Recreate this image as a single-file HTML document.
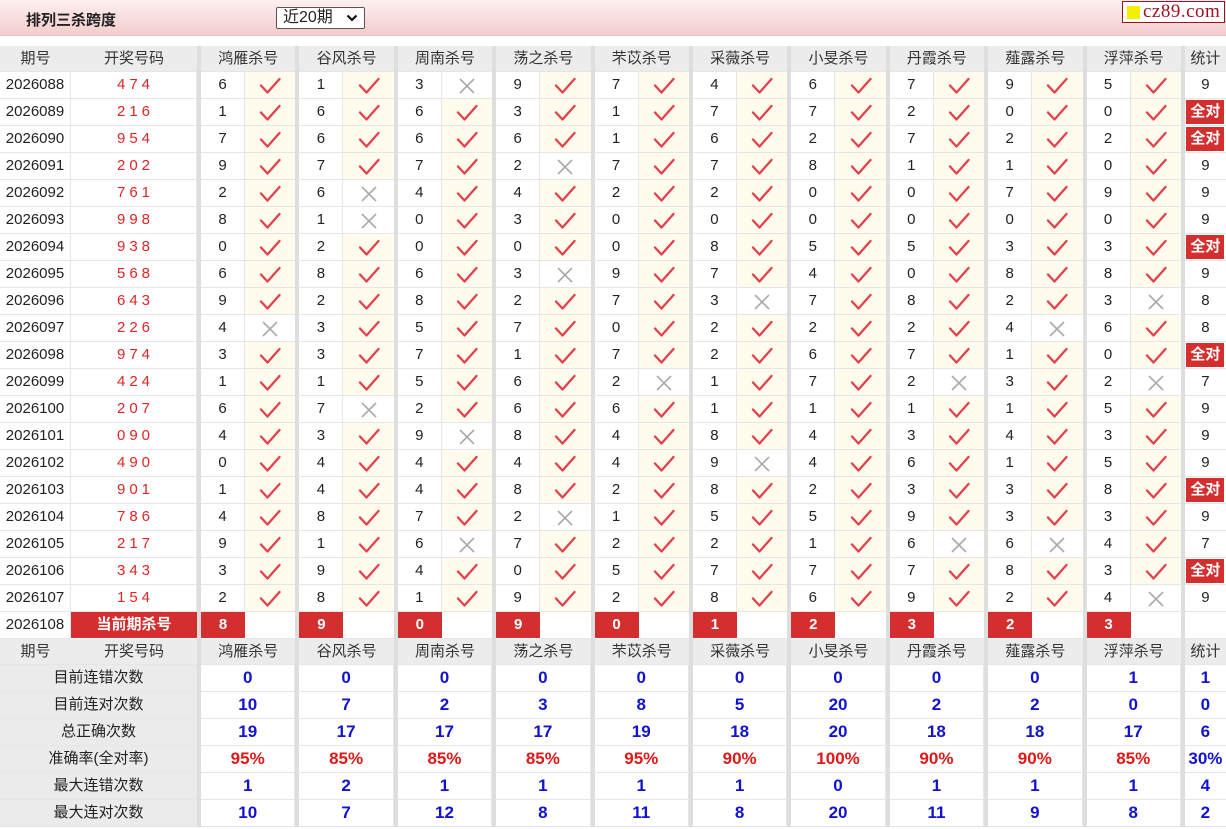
<!DOCTYPE html>
<html><head><meta charset="utf-8">
<style>
*{margin:0;padding:0;box-sizing:border-box}
body{width:1226px;height:829px;background:#fff;font-family:"Liberation Sans","Noto Sans CJK SC",sans-serif;font-size:15px;color:#222;overflow:hidden;position:relative}
.top{position:absolute;left:0;top:0;width:1226px;height:36px;background:linear-gradient(#fdf0f0,#f4cccc);border-bottom:1px solid #e8c4c4}
.top h1{position:absolute;left:26px;top:9px;font-size:15px;font-weight:bold;color:#222}
.sel{position:absolute;left:276px;top:7px;width:89px;height:22px;border:1px solid #555;border-radius:2px;background:#fff;font-size:16px;padding-left:6px;line-height:20px}
.sel svg{position:absolute;right:6px;top:6px}
.logo{position:absolute;left:1122px;top:1px;width:103px;height:22px;border:1px solid #a01020;background:#fff;font-family:"Liberation Serif",serif;font-size:19px;color:#a01020;line-height:20px;padding-left:20px;letter-spacing:0.5px}
.logo b{position:absolute;left:4px;top:4px;width:13px;height:13px;background:#f4f000}
.t{position:absolute;left:0;top:46px;width:1226px}
.r{display:grid;grid-template-columns:71px 126px repeat(10,4px 44px 50.4px) 4px 41px;height:27px}
.r>div{border-bottom:1px solid #e6e6e6;text-align:center;line-height:26px;white-space:nowrap;overflow:hidden}
.r>.s{background:#dedede;border-bottom:none}
.h{height:26px}
.h>div{background:#ececec;color:#333;font-size:15px;line-height:26px}
.r>.p{border-right:1px solid #e6e6e6;font-size:15px}
.r>.n{color:#e02424;letter-spacing:4px;padding-left:4px;border-right:1px solid #e6e6e6;font-size:15px}
.r>.d{border-right:1px solid #e6e6e6}
.r>.y{background:#fffcee}
.r>.y svg,.r>.w svg{margin-top:5px}
.r>.st{}
.q{display:inline-block;background:#d42f2f;color:#fff;font-weight:bold;width:38px;height:24px;line-height:24px;margin-top:1px;font-size:15px}
.cur>.k{background:#d42f2f;color:#fff;font-weight:bold;border-bottom:1px solid #fff}
.lab{grid-column:1 / span 2;background:#ebebeb !important;font-size:15px}
.v{grid-column:span 2;color:#1212d0;font-weight:bold;font-size:17px;border-right:1px solid #e6e6e6}
.red{color:#e01818}
.sv{color:#1212d0;font-weight:bold;font-size:17px}
</style></head><body>
<svg width="0" height="0" style="position:absolute">
<symbol id="k" viewBox="0 0 22 18"><path d="M2 8.5 L8.5 15.5 L20.5 2" fill="none" stroke="#e2404c" stroke-width="2.3" stroke-linecap="round" stroke-linejoin="round"/></symbol>
<symbol id="x" viewBox="0 0 22 18"><path d="M4 2 L18 16 M18 2 L4 16" fill="none" stroke="#aaa" stroke-width="1.6"/></symbol>
</svg>
<div class="top"><h1>排列三杀跨度</h1>
<div class="sel">近20期<svg width="12" height="8" viewBox="0 0 12 8"><path d="M1.5 1.5 L6 6 L10.5 1.5" fill="none" stroke="#111" stroke-width="2.2"/></svg></div>
<div class="logo"><b></b>cz89.com</div></div>
<div class="t">
<div class="r h"><div>期号</div><div>开奖号码</div><div class="s"></div><div style="grid-column:span 2">鸿雁杀号</div><div class="s"></div><div style="grid-column:span 2">谷风杀号</div><div class="s"></div><div style="grid-column:span 2">周南杀号</div><div class="s"></div><div style="grid-column:span 2">荡之杀号</div><div class="s"></div><div style="grid-column:span 2">芣苡杀号</div><div class="s"></div><div style="grid-column:span 2">采薇杀号</div><div class="s"></div><div style="grid-column:span 2">小旻杀号</div><div class="s"></div><div style="grid-column:span 2">丹霞杀号</div><div class="s"></div><div style="grid-column:span 2">薤露杀号</div><div class="s"></div><div style="grid-column:span 2">浮萍杀号</div><div class="s"></div><div>统计</div></div>
<div class="r"><div class="p">2026088</div><div class="n">474</div><div class="s"></div><div class="d">6</div><div class="y"><svg width="22" height="18"><use href="#k"/></svg></div><div class="s"></div><div class="d">1</div><div class="y"><svg width="22" height="18"><use href="#k"/></svg></div><div class="s"></div><div class="d">3</div><div class="w"><svg width="22" height="18"><use href="#x"/></svg></div><div class="s"></div><div class="d">9</div><div class="y"><svg width="22" height="18"><use href="#k"/></svg></div><div class="s"></div><div class="d">7</div><div class="y"><svg width="22" height="18"><use href="#k"/></svg></div><div class="s"></div><div class="d">4</div><div class="y"><svg width="22" height="18"><use href="#k"/></svg></div><div class="s"></div><div class="d">6</div><div class="y"><svg width="22" height="18"><use href="#k"/></svg></div><div class="s"></div><div class="d">7</div><div class="y"><svg width="22" height="18"><use href="#k"/></svg></div><div class="s"></div><div class="d">9</div><div class="y"><svg width="22" height="18"><use href="#k"/></svg></div><div class="s"></div><div class="d">5</div><div class="y"><svg width="22" height="18"><use href="#k"/></svg></div><div class="s"></div><div>9</div></div>
<div class="r"><div class="p">2026089</div><div class="n">216</div><div class="s"></div><div class="d">1</div><div class="y"><svg width="22" height="18"><use href="#k"/></svg></div><div class="s"></div><div class="d">6</div><div class="y"><svg width="22" height="18"><use href="#k"/></svg></div><div class="s"></div><div class="d">6</div><div class="y"><svg width="22" height="18"><use href="#k"/></svg></div><div class="s"></div><div class="d">3</div><div class="y"><svg width="22" height="18"><use href="#k"/></svg></div><div class="s"></div><div class="d">1</div><div class="y"><svg width="22" height="18"><use href="#k"/></svg></div><div class="s"></div><div class="d">7</div><div class="y"><svg width="22" height="18"><use href="#k"/></svg></div><div class="s"></div><div class="d">7</div><div class="y"><svg width="22" height="18"><use href="#k"/></svg></div><div class="s"></div><div class="d">2</div><div class="y"><svg width="22" height="18"><use href="#k"/></svg></div><div class="s"></div><div class="d">0</div><div class="y"><svg width="22" height="18"><use href="#k"/></svg></div><div class="s"></div><div class="d">0</div><div class="y"><svg width="22" height="18"><use href="#k"/></svg></div><div class="s"></div><div><span class="q">全对</span></div></div>
<div class="r"><div class="p">2026090</div><div class="n">954</div><div class="s"></div><div class="d">7</div><div class="y"><svg width="22" height="18"><use href="#k"/></svg></div><div class="s"></div><div class="d">6</div><div class="y"><svg width="22" height="18"><use href="#k"/></svg></div><div class="s"></div><div class="d">6</div><div class="y"><svg width="22" height="18"><use href="#k"/></svg></div><div class="s"></div><div class="d">6</div><div class="y"><svg width="22" height="18"><use href="#k"/></svg></div><div class="s"></div><div class="d">1</div><div class="y"><svg width="22" height="18"><use href="#k"/></svg></div><div class="s"></div><div class="d">6</div><div class="y"><svg width="22" height="18"><use href="#k"/></svg></div><div class="s"></div><div class="d">2</div><div class="y"><svg width="22" height="18"><use href="#k"/></svg></div><div class="s"></div><div class="d">7</div><div class="y"><svg width="22" height="18"><use href="#k"/></svg></div><div class="s"></div><div class="d">2</div><div class="y"><svg width="22" height="18"><use href="#k"/></svg></div><div class="s"></div><div class="d">2</div><div class="y"><svg width="22" height="18"><use href="#k"/></svg></div><div class="s"></div><div><span class="q">全对</span></div></div>
<div class="r"><div class="p">2026091</div><div class="n">202</div><div class="s"></div><div class="d">9</div><div class="y"><svg width="22" height="18"><use href="#k"/></svg></div><div class="s"></div><div class="d">7</div><div class="y"><svg width="22" height="18"><use href="#k"/></svg></div><div class="s"></div><div class="d">7</div><div class="y"><svg width="22" height="18"><use href="#k"/></svg></div><div class="s"></div><div class="d">2</div><div class="w"><svg width="22" height="18"><use href="#x"/></svg></div><div class="s"></div><div class="d">7</div><div class="y"><svg width="22" height="18"><use href="#k"/></svg></div><div class="s"></div><div class="d">7</div><div class="y"><svg width="22" height="18"><use href="#k"/></svg></div><div class="s"></div><div class="d">8</div><div class="y"><svg width="22" height="18"><use href="#k"/></svg></div><div class="s"></div><div class="d">1</div><div class="y"><svg width="22" height="18"><use href="#k"/></svg></div><div class="s"></div><div class="d">1</div><div class="y"><svg width="22" height="18"><use href="#k"/></svg></div><div class="s"></div><div class="d">0</div><div class="y"><svg width="22" height="18"><use href="#k"/></svg></div><div class="s"></div><div>9</div></div>
<div class="r"><div class="p">2026092</div><div class="n">761</div><div class="s"></div><div class="d">2</div><div class="y"><svg width="22" height="18"><use href="#k"/></svg></div><div class="s"></div><div class="d">6</div><div class="w"><svg width="22" height="18"><use href="#x"/></svg></div><div class="s"></div><div class="d">4</div><div class="y"><svg width="22" height="18"><use href="#k"/></svg></div><div class="s"></div><div class="d">4</div><div class="y"><svg width="22" height="18"><use href="#k"/></svg></div><div class="s"></div><div class="d">2</div><div class="y"><svg width="22" height="18"><use href="#k"/></svg></div><div class="s"></div><div class="d">2</div><div class="y"><svg width="22" height="18"><use href="#k"/></svg></div><div class="s"></div><div class="d">0</div><div class="y"><svg width="22" height="18"><use href="#k"/></svg></div><div class="s"></div><div class="d">0</div><div class="y"><svg width="22" height="18"><use href="#k"/></svg></div><div class="s"></div><div class="d">7</div><div class="y"><svg width="22" height="18"><use href="#k"/></svg></div><div class="s"></div><div class="d">9</div><div class="y"><svg width="22" height="18"><use href="#k"/></svg></div><div class="s"></div><div>9</div></div>
<div class="r"><div class="p">2026093</div><div class="n">998</div><div class="s"></div><div class="d">8</div><div class="y"><svg width="22" height="18"><use href="#k"/></svg></div><div class="s"></div><div class="d">1</div><div class="w"><svg width="22" height="18"><use href="#x"/></svg></div><div class="s"></div><div class="d">0</div><div class="y"><svg width="22" height="18"><use href="#k"/></svg></div><div class="s"></div><div class="d">3</div><div class="y"><svg width="22" height="18"><use href="#k"/></svg></div><div class="s"></div><div class="d">0</div><div class="y"><svg width="22" height="18"><use href="#k"/></svg></div><div class="s"></div><div class="d">0</div><div class="y"><svg width="22" height="18"><use href="#k"/></svg></div><div class="s"></div><div class="d">0</div><div class="y"><svg width="22" height="18"><use href="#k"/></svg></div><div class="s"></div><div class="d">0</div><div class="y"><svg width="22" height="18"><use href="#k"/></svg></div><div class="s"></div><div class="d">0</div><div class="y"><svg width="22" height="18"><use href="#k"/></svg></div><div class="s"></div><div class="d">0</div><div class="y"><svg width="22" height="18"><use href="#k"/></svg></div><div class="s"></div><div>9</div></div>
<div class="r"><div class="p">2026094</div><div class="n">938</div><div class="s"></div><div class="d">0</div><div class="y"><svg width="22" height="18"><use href="#k"/></svg></div><div class="s"></div><div class="d">2</div><div class="y"><svg width="22" height="18"><use href="#k"/></svg></div><div class="s"></div><div class="d">0</div><div class="y"><svg width="22" height="18"><use href="#k"/></svg></div><div class="s"></div><div class="d">0</div><div class="y"><svg width="22" height="18"><use href="#k"/></svg></div><div class="s"></div><div class="d">0</div><div class="y"><svg width="22" height="18"><use href="#k"/></svg></div><div class="s"></div><div class="d">8</div><div class="y"><svg width="22" height="18"><use href="#k"/></svg></div><div class="s"></div><div class="d">5</div><div class="y"><svg width="22" height="18"><use href="#k"/></svg></div><div class="s"></div><div class="d">5</div><div class="y"><svg width="22" height="18"><use href="#k"/></svg></div><div class="s"></div><div class="d">3</div><div class="y"><svg width="22" height="18"><use href="#k"/></svg></div><div class="s"></div><div class="d">3</div><div class="y"><svg width="22" height="18"><use href="#k"/></svg></div><div class="s"></div><div><span class="q">全对</span></div></div>
<div class="r"><div class="p">2026095</div><div class="n">568</div><div class="s"></div><div class="d">6</div><div class="y"><svg width="22" height="18"><use href="#k"/></svg></div><div class="s"></div><div class="d">8</div><div class="y"><svg width="22" height="18"><use href="#k"/></svg></div><div class="s"></div><div class="d">6</div><div class="y"><svg width="22" height="18"><use href="#k"/></svg></div><div class="s"></div><div class="d">3</div><div class="w"><svg width="22" height="18"><use href="#x"/></svg></div><div class="s"></div><div class="d">9</div><div class="y"><svg width="22" height="18"><use href="#k"/></svg></div><div class="s"></div><div class="d">7</div><div class="y"><svg width="22" height="18"><use href="#k"/></svg></div><div class="s"></div><div class="d">4</div><div class="y"><svg width="22" height="18"><use href="#k"/></svg></div><div class="s"></div><div class="d">0</div><div class="y"><svg width="22" height="18"><use href="#k"/></svg></div><div class="s"></div><div class="d">8</div><div class="y"><svg width="22" height="18"><use href="#k"/></svg></div><div class="s"></div><div class="d">8</div><div class="y"><svg width="22" height="18"><use href="#k"/></svg></div><div class="s"></div><div>9</div></div>
<div class="r"><div class="p">2026096</div><div class="n">643</div><div class="s"></div><div class="d">9</div><div class="y"><svg width="22" height="18"><use href="#k"/></svg></div><div class="s"></div><div class="d">2</div><div class="y"><svg width="22" height="18"><use href="#k"/></svg></div><div class="s"></div><div class="d">8</div><div class="y"><svg width="22" height="18"><use href="#k"/></svg></div><div class="s"></div><div class="d">2</div><div class="y"><svg width="22" height="18"><use href="#k"/></svg></div><div class="s"></div><div class="d">7</div><div class="y"><svg width="22" height="18"><use href="#k"/></svg></div><div class="s"></div><div class="d">3</div><div class="w"><svg width="22" height="18"><use href="#x"/></svg></div><div class="s"></div><div class="d">7</div><div class="y"><svg width="22" height="18"><use href="#k"/></svg></div><div class="s"></div><div class="d">8</div><div class="y"><svg width="22" height="18"><use href="#k"/></svg></div><div class="s"></div><div class="d">2</div><div class="y"><svg width="22" height="18"><use href="#k"/></svg></div><div class="s"></div><div class="d">3</div><div class="w"><svg width="22" height="18"><use href="#x"/></svg></div><div class="s"></div><div>8</div></div>
<div class="r"><div class="p">2026097</div><div class="n">226</div><div class="s"></div><div class="d">4</div><div class="w"><svg width="22" height="18"><use href="#x"/></svg></div><div class="s"></div><div class="d">3</div><div class="y"><svg width="22" height="18"><use href="#k"/></svg></div><div class="s"></div><div class="d">5</div><div class="y"><svg width="22" height="18"><use href="#k"/></svg></div><div class="s"></div><div class="d">7</div><div class="y"><svg width="22" height="18"><use href="#k"/></svg></div><div class="s"></div><div class="d">0</div><div class="y"><svg width="22" height="18"><use href="#k"/></svg></div><div class="s"></div><div class="d">2</div><div class="y"><svg width="22" height="18"><use href="#k"/></svg></div><div class="s"></div><div class="d">2</div><div class="y"><svg width="22" height="18"><use href="#k"/></svg></div><div class="s"></div><div class="d">2</div><div class="y"><svg width="22" height="18"><use href="#k"/></svg></div><div class="s"></div><div class="d">4</div><div class="w"><svg width="22" height="18"><use href="#x"/></svg></div><div class="s"></div><div class="d">6</div><div class="y"><svg width="22" height="18"><use href="#k"/></svg></div><div class="s"></div><div>8</div></div>
<div class="r"><div class="p">2026098</div><div class="n">974</div><div class="s"></div><div class="d">3</div><div class="y"><svg width="22" height="18"><use href="#k"/></svg></div><div class="s"></div><div class="d">3</div><div class="y"><svg width="22" height="18"><use href="#k"/></svg></div><div class="s"></div><div class="d">7</div><div class="y"><svg width="22" height="18"><use href="#k"/></svg></div><div class="s"></div><div class="d">1</div><div class="y"><svg width="22" height="18"><use href="#k"/></svg></div><div class="s"></div><div class="d">7</div><div class="y"><svg width="22" height="18"><use href="#k"/></svg></div><div class="s"></div><div class="d">2</div><div class="y"><svg width="22" height="18"><use href="#k"/></svg></div><div class="s"></div><div class="d">6</div><div class="y"><svg width="22" height="18"><use href="#k"/></svg></div><div class="s"></div><div class="d">7</div><div class="y"><svg width="22" height="18"><use href="#k"/></svg></div><div class="s"></div><div class="d">1</div><div class="y"><svg width="22" height="18"><use href="#k"/></svg></div><div class="s"></div><div class="d">0</div><div class="y"><svg width="22" height="18"><use href="#k"/></svg></div><div class="s"></div><div><span class="q">全对</span></div></div>
<div class="r"><div class="p">2026099</div><div class="n">424</div><div class="s"></div><div class="d">1</div><div class="y"><svg width="22" height="18"><use href="#k"/></svg></div><div class="s"></div><div class="d">1</div><div class="y"><svg width="22" height="18"><use href="#k"/></svg></div><div class="s"></div><div class="d">5</div><div class="y"><svg width="22" height="18"><use href="#k"/></svg></div><div class="s"></div><div class="d">6</div><div class="y"><svg width="22" height="18"><use href="#k"/></svg></div><div class="s"></div><div class="d">2</div><div class="w"><svg width="22" height="18"><use href="#x"/></svg></div><div class="s"></div><div class="d">1</div><div class="y"><svg width="22" height="18"><use href="#k"/></svg></div><div class="s"></div><div class="d">7</div><div class="y"><svg width="22" height="18"><use href="#k"/></svg></div><div class="s"></div><div class="d">2</div><div class="w"><svg width="22" height="18"><use href="#x"/></svg></div><div class="s"></div><div class="d">3</div><div class="y"><svg width="22" height="18"><use href="#k"/></svg></div><div class="s"></div><div class="d">2</div><div class="w"><svg width="22" height="18"><use href="#x"/></svg></div><div class="s"></div><div>7</div></div>
<div class="r"><div class="p">2026100</div><div class="n">207</div><div class="s"></div><div class="d">6</div><div class="y"><svg width="22" height="18"><use href="#k"/></svg></div><div class="s"></div><div class="d">7</div><div class="w"><svg width="22" height="18"><use href="#x"/></svg></div><div class="s"></div><div class="d">2</div><div class="y"><svg width="22" height="18"><use href="#k"/></svg></div><div class="s"></div><div class="d">6</div><div class="y"><svg width="22" height="18"><use href="#k"/></svg></div><div class="s"></div><div class="d">6</div><div class="y"><svg width="22" height="18"><use href="#k"/></svg></div><div class="s"></div><div class="d">1</div><div class="y"><svg width="22" height="18"><use href="#k"/></svg></div><div class="s"></div><div class="d">1</div><div class="y"><svg width="22" height="18"><use href="#k"/></svg></div><div class="s"></div><div class="d">1</div><div class="y"><svg width="22" height="18"><use href="#k"/></svg></div><div class="s"></div><div class="d">1</div><div class="y"><svg width="22" height="18"><use href="#k"/></svg></div><div class="s"></div><div class="d">5</div><div class="y"><svg width="22" height="18"><use href="#k"/></svg></div><div class="s"></div><div>9</div></div>
<div class="r"><div class="p">2026101</div><div class="n">090</div><div class="s"></div><div class="d">4</div><div class="y"><svg width="22" height="18"><use href="#k"/></svg></div><div class="s"></div><div class="d">3</div><div class="y"><svg width="22" height="18"><use href="#k"/></svg></div><div class="s"></div><div class="d">9</div><div class="w"><svg width="22" height="18"><use href="#x"/></svg></div><div class="s"></div><div class="d">8</div><div class="y"><svg width="22" height="18"><use href="#k"/></svg></div><div class="s"></div><div class="d">4</div><div class="y"><svg width="22" height="18"><use href="#k"/></svg></div><div class="s"></div><div class="d">8</div><div class="y"><svg width="22" height="18"><use href="#k"/></svg></div><div class="s"></div><div class="d">4</div><div class="y"><svg width="22" height="18"><use href="#k"/></svg></div><div class="s"></div><div class="d">3</div><div class="y"><svg width="22" height="18"><use href="#k"/></svg></div><div class="s"></div><div class="d">4</div><div class="y"><svg width="22" height="18"><use href="#k"/></svg></div><div class="s"></div><div class="d">3</div><div class="y"><svg width="22" height="18"><use href="#k"/></svg></div><div class="s"></div><div>9</div></div>
<div class="r"><div class="p">2026102</div><div class="n">490</div><div class="s"></div><div class="d">0</div><div class="y"><svg width="22" height="18"><use href="#k"/></svg></div><div class="s"></div><div class="d">4</div><div class="y"><svg width="22" height="18"><use href="#k"/></svg></div><div class="s"></div><div class="d">4</div><div class="y"><svg width="22" height="18"><use href="#k"/></svg></div><div class="s"></div><div class="d">4</div><div class="y"><svg width="22" height="18"><use href="#k"/></svg></div><div class="s"></div><div class="d">4</div><div class="y"><svg width="22" height="18"><use href="#k"/></svg></div><div class="s"></div><div class="d">9</div><div class="w"><svg width="22" height="18"><use href="#x"/></svg></div><div class="s"></div><div class="d">4</div><div class="y"><svg width="22" height="18"><use href="#k"/></svg></div><div class="s"></div><div class="d">6</div><div class="y"><svg width="22" height="18"><use href="#k"/></svg></div><div class="s"></div><div class="d">1</div><div class="y"><svg width="22" height="18"><use href="#k"/></svg></div><div class="s"></div><div class="d">5</div><div class="y"><svg width="22" height="18"><use href="#k"/></svg></div><div class="s"></div><div>9</div></div>
<div class="r"><div class="p">2026103</div><div class="n">901</div><div class="s"></div><div class="d">1</div><div class="y"><svg width="22" height="18"><use href="#k"/></svg></div><div class="s"></div><div class="d">4</div><div class="y"><svg width="22" height="18"><use href="#k"/></svg></div><div class="s"></div><div class="d">4</div><div class="y"><svg width="22" height="18"><use href="#k"/></svg></div><div class="s"></div><div class="d">8</div><div class="y"><svg width="22" height="18"><use href="#k"/></svg></div><div class="s"></div><div class="d">2</div><div class="y"><svg width="22" height="18"><use href="#k"/></svg></div><div class="s"></div><div class="d">8</div><div class="y"><svg width="22" height="18"><use href="#k"/></svg></div><div class="s"></div><div class="d">2</div><div class="y"><svg width="22" height="18"><use href="#k"/></svg></div><div class="s"></div><div class="d">3</div><div class="y"><svg width="22" height="18"><use href="#k"/></svg></div><div class="s"></div><div class="d">3</div><div class="y"><svg width="22" height="18"><use href="#k"/></svg></div><div class="s"></div><div class="d">8</div><div class="y"><svg width="22" height="18"><use href="#k"/></svg></div><div class="s"></div><div><span class="q">全对</span></div></div>
<div class="r"><div class="p">2026104</div><div class="n">786</div><div class="s"></div><div class="d">4</div><div class="y"><svg width="22" height="18"><use href="#k"/></svg></div><div class="s"></div><div class="d">8</div><div class="y"><svg width="22" height="18"><use href="#k"/></svg></div><div class="s"></div><div class="d">7</div><div class="y"><svg width="22" height="18"><use href="#k"/></svg></div><div class="s"></div><div class="d">2</div><div class="w"><svg width="22" height="18"><use href="#x"/></svg></div><div class="s"></div><div class="d">1</div><div class="y"><svg width="22" height="18"><use href="#k"/></svg></div><div class="s"></div><div class="d">5</div><div class="y"><svg width="22" height="18"><use href="#k"/></svg></div><div class="s"></div><div class="d">5</div><div class="y"><svg width="22" height="18"><use href="#k"/></svg></div><div class="s"></div><div class="d">9</div><div class="y"><svg width="22" height="18"><use href="#k"/></svg></div><div class="s"></div><div class="d">3</div><div class="y"><svg width="22" height="18"><use href="#k"/></svg></div><div class="s"></div><div class="d">3</div><div class="y"><svg width="22" height="18"><use href="#k"/></svg></div><div class="s"></div><div>9</div></div>
<div class="r"><div class="p">2026105</div><div class="n">217</div><div class="s"></div><div class="d">9</div><div class="y"><svg width="22" height="18"><use href="#k"/></svg></div><div class="s"></div><div class="d">1</div><div class="y"><svg width="22" height="18"><use href="#k"/></svg></div><div class="s"></div><div class="d">6</div><div class="w"><svg width="22" height="18"><use href="#x"/></svg></div><div class="s"></div><div class="d">7</div><div class="y"><svg width="22" height="18"><use href="#k"/></svg></div><div class="s"></div><div class="d">2</div><div class="y"><svg width="22" height="18"><use href="#k"/></svg></div><div class="s"></div><div class="d">2</div><div class="y"><svg width="22" height="18"><use href="#k"/></svg></div><div class="s"></div><div class="d">1</div><div class="y"><svg width="22" height="18"><use href="#k"/></svg></div><div class="s"></div><div class="d">6</div><div class="w"><svg width="22" height="18"><use href="#x"/></svg></div><div class="s"></div><div class="d">6</div><div class="w"><svg width="22" height="18"><use href="#x"/></svg></div><div class="s"></div><div class="d">4</div><div class="y"><svg width="22" height="18"><use href="#k"/></svg></div><div class="s"></div><div>7</div></div>
<div class="r"><div class="p">2026106</div><div class="n">343</div><div class="s"></div><div class="d">3</div><div class="y"><svg width="22" height="18"><use href="#k"/></svg></div><div class="s"></div><div class="d">9</div><div class="y"><svg width="22" height="18"><use href="#k"/></svg></div><div class="s"></div><div class="d">4</div><div class="y"><svg width="22" height="18"><use href="#k"/></svg></div><div class="s"></div><div class="d">0</div><div class="y"><svg width="22" height="18"><use href="#k"/></svg></div><div class="s"></div><div class="d">5</div><div class="y"><svg width="22" height="18"><use href="#k"/></svg></div><div class="s"></div><div class="d">7</div><div class="y"><svg width="22" height="18"><use href="#k"/></svg></div><div class="s"></div><div class="d">7</div><div class="y"><svg width="22" height="18"><use href="#k"/></svg></div><div class="s"></div><div class="d">7</div><div class="y"><svg width="22" height="18"><use href="#k"/></svg></div><div class="s"></div><div class="d">8</div><div class="y"><svg width="22" height="18"><use href="#k"/></svg></div><div class="s"></div><div class="d">3</div><div class="y"><svg width="22" height="18"><use href="#k"/></svg></div><div class="s"></div><div><span class="q">全对</span></div></div>
<div class="r"><div class="p">2026107</div><div class="n">154</div><div class="s"></div><div class="d">2</div><div class="y"><svg width="22" height="18"><use href="#k"/></svg></div><div class="s"></div><div class="d">8</div><div class="y"><svg width="22" height="18"><use href="#k"/></svg></div><div class="s"></div><div class="d">1</div><div class="y"><svg width="22" height="18"><use href="#k"/></svg></div><div class="s"></div><div class="d">9</div><div class="y"><svg width="22" height="18"><use href="#k"/></svg></div><div class="s"></div><div class="d">2</div><div class="y"><svg width="22" height="18"><use href="#k"/></svg></div><div class="s"></div><div class="d">8</div><div class="y"><svg width="22" height="18"><use href="#k"/></svg></div><div class="s"></div><div class="d">6</div><div class="y"><svg width="22" height="18"><use href="#k"/></svg></div><div class="s"></div><div class="d">9</div><div class="y"><svg width="22" height="18"><use href="#k"/></svg></div><div class="s"></div><div class="d">2</div><div class="y"><svg width="22" height="18"><use href="#k"/></svg></div><div class="s"></div><div class="d">4</div><div class="w"><svg width="22" height="18"><use href="#x"/></svg></div><div class="s"></div><div>9</div></div>
<div class="r cur"><div class="p">2026108</div><div class="k">当前期杀号</div><div class="s"></div><div class="k">8</div><div></div><div class="s"></div><div class="k">9</div><div></div><div class="s"></div><div class="k">0</div><div></div><div class="s"></div><div class="k">9</div><div></div><div class="s"></div><div class="k">0</div><div></div><div class="s"></div><div class="k">1</div><div></div><div class="s"></div><div class="k">2</div><div></div><div class="s"></div><div class="k">3</div><div></div><div class="s"></div><div class="k">2</div><div></div><div class="s"></div><div class="k">3</div><div></div><div class="s"></div><div></div></div>
<div class="r h"><div>期号</div><div>开奖号码</div><div class="s"></div><div style="grid-column:span 2">鸿雁杀号</div><div class="s"></div><div style="grid-column:span 2">谷风杀号</div><div class="s"></div><div style="grid-column:span 2">周南杀号</div><div class="s"></div><div style="grid-column:span 2">荡之杀号</div><div class="s"></div><div style="grid-column:span 2">芣苡杀号</div><div class="s"></div><div style="grid-column:span 2">采薇杀号</div><div class="s"></div><div style="grid-column:span 2">小旻杀号</div><div class="s"></div><div style="grid-column:span 2">丹霞杀号</div><div class="s"></div><div style="grid-column:span 2">薤露杀号</div><div class="s"></div><div style="grid-column:span 2">浮萍杀号</div><div class="s"></div><div>统计</div></div>
<div class="r"><div class="lab">目前连错次数</div><div class="s"></div><div class="v">0</div><div class="s"></div><div class="v">0</div><div class="s"></div><div class="v">0</div><div class="s"></div><div class="v">0</div><div class="s"></div><div class="v">0</div><div class="s"></div><div class="v">0</div><div class="s"></div><div class="v">0</div><div class="s"></div><div class="v">0</div><div class="s"></div><div class="v">0</div><div class="s"></div><div class="v">1</div><div class="s"></div><div class="sv">1</div></div>
<div class="r"><div class="lab">目前连对次数</div><div class="s"></div><div class="v">10</div><div class="s"></div><div class="v">7</div><div class="s"></div><div class="v">2</div><div class="s"></div><div class="v">3</div><div class="s"></div><div class="v">8</div><div class="s"></div><div class="v">5</div><div class="s"></div><div class="v">20</div><div class="s"></div><div class="v">2</div><div class="s"></div><div class="v">2</div><div class="s"></div><div class="v">0</div><div class="s"></div><div class="sv">0</div></div>
<div class="r"><div class="lab">总正确次数</div><div class="s"></div><div class="v">19</div><div class="s"></div><div class="v">17</div><div class="s"></div><div class="v">17</div><div class="s"></div><div class="v">17</div><div class="s"></div><div class="v">19</div><div class="s"></div><div class="v">18</div><div class="s"></div><div class="v">20</div><div class="s"></div><div class="v">18</div><div class="s"></div><div class="v">18</div><div class="s"></div><div class="v">17</div><div class="s"></div><div class="sv">6</div></div>
<div class="r"><div class="lab">准确率(全对率)</div><div class="s"></div><div class="v red">95%</div><div class="s"></div><div class="v red">85%</div><div class="s"></div><div class="v red">85%</div><div class="s"></div><div class="v red">85%</div><div class="s"></div><div class="v red">95%</div><div class="s"></div><div class="v red">90%</div><div class="s"></div><div class="v red">100%</div><div class="s"></div><div class="v red">90%</div><div class="s"></div><div class="v red">90%</div><div class="s"></div><div class="v red">85%</div><div class="s"></div><div class="sv red">30%</div></div>
<div class="r"><div class="lab">最大连错次数</div><div class="s"></div><div class="v">1</div><div class="s"></div><div class="v">2</div><div class="s"></div><div class="v">1</div><div class="s"></div><div class="v">1</div><div class="s"></div><div class="v">1</div><div class="s"></div><div class="v">1</div><div class="s"></div><div class="v">0</div><div class="s"></div><div class="v">1</div><div class="s"></div><div class="v">1</div><div class="s"></div><div class="v">1</div><div class="s"></div><div class="sv">4</div></div>
<div class="r"><div class="lab">最大连对次数</div><div class="s"></div><div class="v">10</div><div class="s"></div><div class="v">7</div><div class="s"></div><div class="v">12</div><div class="s"></div><div class="v">8</div><div class="s"></div><div class="v">11</div><div class="s"></div><div class="v">8</div><div class="s"></div><div class="v">20</div><div class="s"></div><div class="v">11</div><div class="s"></div><div class="v">9</div><div class="s"></div><div class="v">8</div><div class="s"></div><div class="sv">2</div></div>
</div>
</body></html>
